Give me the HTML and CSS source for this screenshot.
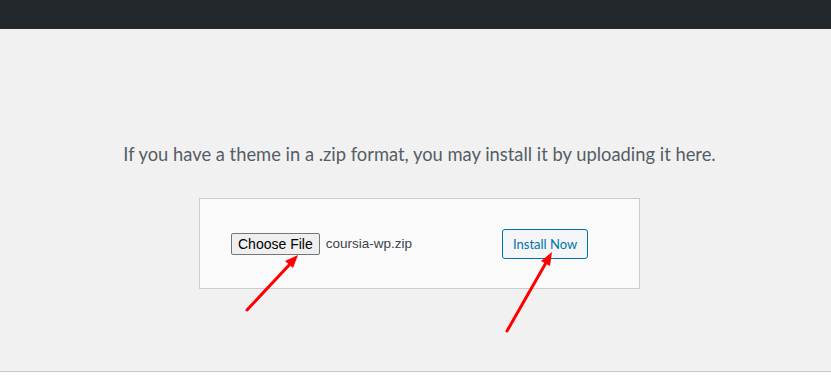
FILE: index.html
```html
<!DOCTYPE html>
<html lang="en">
<head>
<meta charset="utf-8">
<title>Upload Theme</title>
<link rel="stylesheet" href="styles.css">
</head>
<body>
<div class="page">
  <header class="adminbar"></header>
  <main class="main">
    <div class="upload">
      <p class="install-help">If you have a theme in a .zip format, you may install it by uploading it here.</p>
      <form class="upload-form">
        <div class="file-field">
          <button type="button" class="file-btn">Choose File</button>
          <span class="file-name">coursia-wp.zip</span>
        </div>
        <button type="button" class="install-btn">Install Now</button>
      </form>
    </div>
  </main>
  <div class="below"></div>
  <svg class="arrows" width="831" height="390" viewBox="0 0 831 390" aria-hidden="true">
    <line x1="247" y1="310" x2="291" y2="263" stroke="#f00" stroke-width="3" stroke-linecap="round"/>
    <polygon points="298,255 293,268 285,261" fill="#f00"/>
    <line x1="507" y1="331" x2="547" y2="261" stroke="#f00" stroke-width="3" stroke-linecap="round"/>
    <polygon points="552,252 550,266 541,261" fill="#f00"/>
  </svg>
</div>
</body>
</html>
```

FILE: styles.css
```css
html, body {
  margin: 0;
  padding: 0;
  background: #fff;
}
.page {
  position: relative;
  width: 831px;
  height: 390px;
  overflow: hidden;
}
.adminbar {
  height: 29px;
  background: #23282d;
}
.main {
  height: 343px;
  background: #f1f1f1;
  border-bottom: 1px solid #c8c9cc;
  box-sizing: border-box;
  padding-left: 8px;
}
.upload {
  display: flex;
  flex-direction: column;
  align-items: center;
  padding-top: 110px;
}
.install-help {
  margin: 0;
  font-family: "Lato", "Open Sans", sans-serif;
  font-size: 18.35px;
  line-height: 30px;
  color: #555d66;
}
.upload-form {
  margin-top: 29px;
  width: 441px;
  height: 91px;
  box-sizing: border-box;
  border: 1px solid #ccc;
  background: #fafafa;
  display: flex;
  align-items: center;
  padding-left: 31px;
  gap: 90px;
}
.file-field {
  display: flex;
  align-items: center;
  gap: 6px;
}
.file-btn {
  font-family: "Liberation Sans", Arial, sans-serif;
  font-size: 14px;
  color: #000;
  background: #efefef;
  border: 1px solid #767676;
  border-radius: 2px;
  padding: 1px 6px;
  height: 22px;
  margin: 0;
}
.file-name {
  font-family: "Liberation Sans", Arial, sans-serif;
  font-size: 13.5px;
  color: #3c434a;
}
.install-btn {
  font-family: "Lato", "Open Sans", sans-serif;
  font-size: 13px;
  color: #0073aa;
  background: #f3f5f6;
  border: 1px solid #0073aa;
  border-radius: 3px;
  height: 30px;
  padding: 0 10px;
  margin: 0;
}
.arrows {
  position: absolute;
  top: 0;
  left: 0;
  pointer-events: none;
}
```
